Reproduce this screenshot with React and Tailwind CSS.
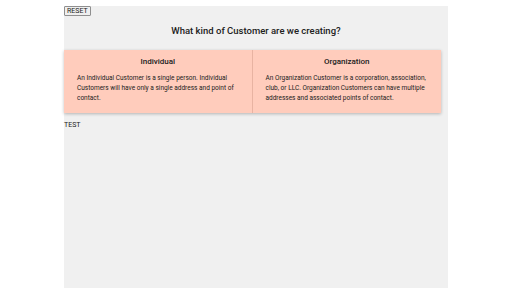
import React from 'react';

const kinds = [
  {
    title: 'Individual',
    text: 'An Individual Customer is a single person. Individual Customers will have only a single address and point of contact.',
  },
  {
    title: 'Organization',
    text: 'An Organization Customer is a corporation, association, club, or LLC. Organization Customers can have multiple addresses and associated points of contact.',
  },
];

export default function App() {
  return (
    <div className="min-h-screen bg-white font-['Roboto',sans-serif] text-[#212121]">
      <div className="mx-auto mt-[6px] w-[384px] min-h-[282px] bg-[#f0f0f0]">
        <button className="block h-[10px] px-[2px] border border-[#8f8f8f] rounded-[1px] bg-[#efefef] text-[7px] leading-none text-[#222]">
          RESET
        </button>
        <h2 className="mt-[9px] text-center text-[9.5px] leading-[12px] font-medium">
          What kind of Customer are we creating?
        </h2>
        <div className="mt-[13px] mr-[7px] grid grid-cols-2 shadow-[0_1px_3px_rgba(0,0,0,0.25)]">
          {kinds.map((k, i) => (
            <div
              key={k.title}
              className={`h-[63px] bg-[#ffccbc] px-[13px] pt-[7px] ${i === 0 ? 'border-r border-[#e8b3a2]' : ''}`}
            >
              <div className="text-center text-[8px] leading-[10px] font-medium">{k.title}</div>
              <p className="mt-[6px] text-[6.5px] leading-[10px]">{k.text}</p>
            </div>
          ))}
        </div>
        <div className="mt-[8px] text-[7px] leading-[9px]">TEST</div>
      </div>
    </div>
  );
}
